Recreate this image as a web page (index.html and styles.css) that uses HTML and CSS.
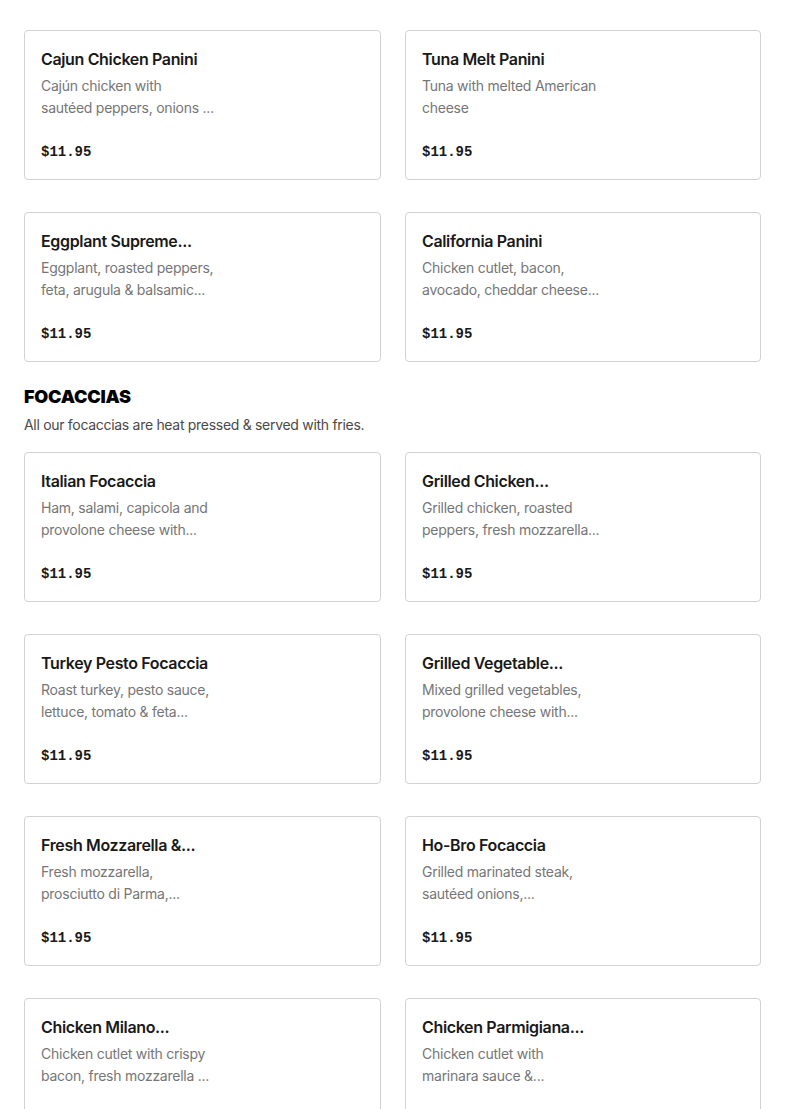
FILE: index.html
```html
<!DOCTYPE html>
<html>
<head>
<meta charset="utf-8">
<link rel="stylesheet" href="styles.css">
</head>
<body>
<main class="menu">
  <section class="section">
    <div class="grid">
      <article class="card">
        <h3 class="title">Cajun Chicken Panini</h3>
        <p class="desc">Cajún chicken with<br>sautéed peppers, onions ...</p>
        <div class="price">$11.95</div>
      </article>
      <article class="card">
        <h3 class="title">Tuna Melt Panini</h3>
        <p class="desc">Tuna with melted American<br>cheese</p>
        <div class="price">$11.95</div>
      </article>
      <article class="card">
        <h3 class="title">Eggplant Supreme...</h3>
        <p class="desc">Eggplant, roasted peppers,<br>feta, arugula &amp; balsamic...</p>
        <div class="price">$11.95</div>
      </article>
      <article class="card">
        <h3 class="title">California Panini</h3>
        <p class="desc">Chicken cutlet, bacon,<br>avocado, cheddar cheese...</p>
        <div class="price">$11.95</div>
      </article>
    </div>
  </section>
  <section class="section">
    <header class="section-head">
      <h2 class="section-title">FOCACCIAS</h2>
      <p class="section-sub">All our focaccias are heat pressed &amp; served with fries.</p>
    </header>
    <div class="grid">
      <article class="card">
        <h3 class="title">Italian Focaccia</h3>
        <p class="desc">Ham, salami, capicola and<br>provolone cheese with...</p>
        <div class="price">$11.95</div>
      </article>
      <article class="card">
        <h3 class="title">Grilled Chicken...</h3>
        <p class="desc">Grilled chicken, roasted<br>peppers, fresh mozzarella...</p>
        <div class="price">$11.95</div>
      </article>
      <article class="card">
        <h3 class="title">Turkey Pesto Focaccia</h3>
        <p class="desc">Roast turkey, pesto sauce,<br>lettuce, tomato &amp; feta...</p>
        <div class="price">$11.95</div>
      </article>
      <article class="card">
        <h3 class="title">Grilled Vegetable...</h3>
        <p class="desc">Mixed grilled vegetables,<br>provolone cheese with...</p>
        <div class="price">$11.95</div>
      </article>
      <article class="card">
        <h3 class="title">Fresh Mozzarella &amp;...</h3>
        <p class="desc">Fresh mozzarella,<br>prosciutto di Parma,...</p>
        <div class="price">$11.95</div>
      </article>
      <article class="card">
        <h3 class="title">Ho-Bro Focaccia</h3>
        <p class="desc">Grilled marinated steak,<br>sautéed onions,...</p>
        <div class="price">$11.95</div>
      </article>
      <article class="card">
        <h3 class="title">Chicken Milano...</h3>
        <p class="desc">Chicken cutlet with crispy<br>bacon, fresh mozzarella ...</p>
        <div class="price">$11.95</div>
      </article>
      <article class="card">
        <h3 class="title">Chicken Parmigiana...</h3>
        <p class="desc">Chicken cutlet with<br>marinara sauce &amp;...</p>
        <div class="price">$11.95</div>
      </article>
    </div>
  </section>
</main>
</body>
</html>
```
FILE: styles.css
```css
* { box-sizing: border-box; }
html, body { margin: 0; padding: 0; background: #fff; }
body { font-family: "Inter", "Liberation Sans", sans-serif; color: #191919; }
.menu { padding: 30px 24px 0 24px; display: flex; flex-direction: column; }
.section { display: flex; flex-direction: column; }
.grid { display: grid; grid-template-columns: 357px 356px; column-gap: 24px; row-gap: 32px; }
.card {
  border: 1px solid #d2d2d2;
  border-radius: 4px;
  padding: 16px;
  height: 150px;
  display: flex; flex-direction: column;
}
.title { margin: 0; font-size: 16px; line-height: 24px; font-weight: 600; color: #191919; letter-spacing: -0.35px; white-space: nowrap; }
.desc { margin: 4px 0 0 0; font-size: 14px; line-height: 22px; color: #767676; letter-spacing: -0.25px; white-space: nowrap; }
.price { margin-top: auto; font-family: "Liberation Mono", monospace; font-weight: 700; font-size: 14px; line-height: 22px; color: #191919; }
.section-head { padding: 24px 0 16px 0; }
.section-title { margin: 0; font-size: 18px; line-height: 22px; font-weight: 900; letter-spacing: -0.2px; color: #000; }
.section-sub { margin: 6px 0 0 0; font-size: 14px; line-height: 22px; color: #494949; letter-spacing: -0.3px; }
```
